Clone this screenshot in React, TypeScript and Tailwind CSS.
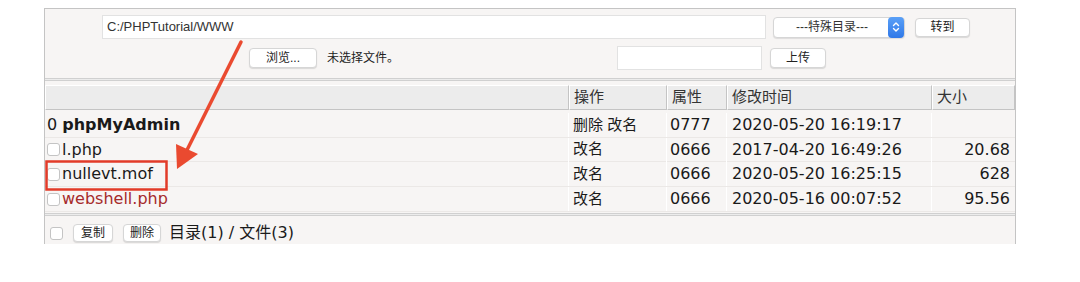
const cjk = 'font-["Liberation_Sans","Noto_Sans_CJK_SC",sans-serif]';
const dv = 'font-["DejaVu_Sans","Noto_Sans_CJK_SC",sans-serif]';

type Row = { name: string; dir?: boolean; ops: string; perm: string; time: string; size: string; red?: boolean };

const rows: Row[] = [
  { name: 'phpMyAdmin', dir: true, ops: '删除 改名', perm: '0777', time: '2020-05-20 16:19:17', size: '' },
  { name: 'l.php', ops: '改名', perm: '0666', time: '2017-04-20 16:49:26', size: '20.68' },
  { name: 'nullevt.mof', ops: '改名', perm: '0666', time: '2020-05-20 16:25:15', size: '628' },
  { name: 'webshell.php', ops: '改名', perm: '0666', time: '2020-05-16 00:07:52', size: '95.56', red: true },
];

function MacButton({ label, w, h = 'h-[20px]' }: { label: string; w: string; h?: string }) {
  return (
    <button
      className={`${w} ${h} ${cjk} flex items-center justify-center rounded-[4px] bg-white text-[12px] text-[#222] border border-[#d6d6d6] shadow-[0_1px_1px_rgba(0,0,0,0.12)]`}
    >
      {label}
    </button>
  );
}

function Check() {
  return <span className="inline-block w-[13px] h-[13px] shrink-0 rounded-[3px] border border-[#c4c4c4] bg-white" />;
}

export default function App() {
  return (
    <div className="relative w-[1080px] h-[282px] bg-white overflow-hidden">
      <div className="pt-[8px] pl-[44px]">
        <div className="w-[972px] h-[236px] border-l border-t border-r border-[#c4c4c4] bg-[#f7f5f4] overflow-hidden">
          {/* form area */}
          <div className="h-[69px]">
            <div className="flex items-center pl-[57px] pt-[6px]">
              <div className={`w-[664px] h-[24px] bg-white border border-[#e2e2e2] flex items-center pl-[4px] text-[13px] text-[#333] ${cjk}`}>
                C:/PHPTutorial/WWW
              </div>
              <div className={`ml-[7px] w-[132px] h-[21px] bg-white rounded-[4px] border border-[#d6d6d6] shadow-[0_1px_1px_rgba(0,0,0,0.1)] flex items-center text-[12px] text-[#333] ${cjk}`}>
                <span className="flex-1 text-center pl-[2px]">---特殊目录---</span>
                <span className="w-[16px] h-[21px] rounded-[4px] bg-gradient-to-b from-[#5aa0f7] to-[#2f78e8] flex items-center justify-center">
                  <svg width="8" height="12" viewBox="0 0 8 12" fill="none" stroke="white" strokeWidth="1.4" strokeLinecap="round" strokeLinejoin="round">
                    <path d="M1.5 4.5 L4 2 L6.5 4.5" />
                    <path d="M1.5 7.5 L4 10 L6.5 7.5" />
                  </svg>
                </span>
              </div>
              <div className="ml-[10px]">
                <MacButton label="转到" w="w-[55px]" h="h-[19px]" />
              </div>
            </div>
            <div className="flex items-center mt-[7px] h-[24px]">
              <div className="ml-[204px]">
                <MacButton label="浏览..." w="w-[68px]" />
              </div>
              <span className={`ml-[10px] text-[12px] text-[#222] ${cjk}`}>未选择文件。</span>
              <div className="ml-[218px] w-[145px] h-[24px] bg-white border border-[#e2e2e2]" />
              <div className="ml-[8px]">
                <MacButton label="上传" w="w-[56px]" />
              </div>
            </div>
          </div>

          {/* separator */}
          <div className="h-[3px] border-t border-b border-[#d0d0d0] bg-[#ececec]" />
          <div className="h-[4px]" />

          {/* table header */}
          <div className={`grid grid-cols-[524px_98px_60px_205px_83px] h-[24px] text-[15px] text-[#333] ${cjk}`}>
            {['', '操作', '属性', '修改时间', '大小'].map((h, i) => (
              <div
                key={i}
                className="bg-[#ececec] border-t border-l border-white border-r border-b border-r-[#c4c4c4] border-b-[#c4c4c4] flex items-center pl-[4px]"
              >
                {h}
              </div>
            ))}
          </div>

          {/* rows */}
          <div className="pt-[4px]">
            {rows.map((r) => (
              <div
                key={r.name}
                className={`grid grid-cols-[524px_98px_60px_205px_83px] h-[24.7px] border-b border-[#ebe8e6] text-[16px] text-[#1a1a1a] ${dv}`}
              >
                <div className="flex items-center pl-[2px] border-r border-white">
                  {r.dir ? (
                    <span>
                      0 <b className="font-bold">{r.name}</b>
                    </span>
                  ) : (
                    <>
                      <Check />
                      <span className={`ml-[2px] ${r.red ? 'text-[#a62b2b]' : ''}`}>{r.name}</span>
                    </>
                  )}
                </div>
                <div className={`flex items-center pl-[4px] border-r border-white text-[15px] ${cjk}`}>{r.ops}</div>
                <div className="flex items-center pl-[3px] border-r border-white">{r.perm}</div>
                <div className="flex items-center pl-[5px] border-r border-white">{r.time}</div>
                <div className="flex items-center justify-end pr-[5px]">{r.size}</div>
              </div>
            ))}
          </div>

          {/* bottom bar */}
          <div className="mt-[1px] h-[3px] border-t border-b border-[#d0d0d0] bg-[#ececec]" />
          <div className="flex items-center h-[28px] pl-[5px] pt-[7px]">
            <Check />
            <div className="ml-[10px]">
              <MacButton label="复制" w="w-[40px]" h="h-[18px]" />
            </div>
            <div className="ml-[10px]">
              <MacButton label="删除" w="w-[38px]" h="h-[18px]" />
            </div>
            <span className={`ml-[8px] text-[16px] text-[#1a1a1a] ${dv}`}>目录(1) / 文件(3)</span>
          </div>
        </div>
      </div>

      {/* annotation overlay */}
      <svg className="absolute left-0 top-0 pointer-events-none" width="1080" height="282">
        <rect x="46.5" y="161.5" width="120" height="28" fill="none" stroke="#e23b29" strokeWidth="2.5" />
        <line x1="241" y1="42" x2="187" y2="150" stroke="#ea4a30" strokeWidth="3.5" strokeLinecap="round" />
        <polygon points="177,169 176,144 198,154" fill="#ea4a30" />
      </svg>
    </div>
  );
}
